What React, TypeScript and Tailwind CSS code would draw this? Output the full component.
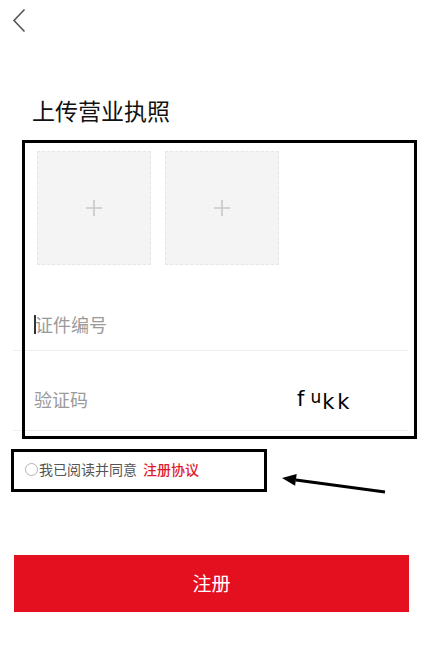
const cjk = { fontFamily: '"Noto Sans CJK SC", "Noto Sans", sans-serif' };

function UploadBox() {
  return (
    <div className="w-[114px] h-[114px] bg-[#f4f4f4] border border-dashed border-[#e6e6e6] flex items-center justify-center">
      <svg width="18" height="18" viewBox="0 0 18 18">
        <path d="M9 1v16M1 9h16" stroke="#c8c8c8" strokeWidth="1.6" />
      </svg>
    </div>
  );
}

export default function App() {
  return (
    <div className="relative w-full h-[655px] bg-white overflow-hidden" style={cjk}>
      <div className="h-[99px] pl-[12px] pt-[8px]">
        <svg width="14" height="25" viewBox="0 0 14 25">
          <path d="M12.5 1.5 2 12.5l10.5 11" fill="none" stroke="#555" strokeWidth="1.6" />
        </svg>
      </div>

      <h1 className="h-[52px] pl-[32px] text-[23px] leading-none text-[#111] font-normal">上传营业执照</h1>

      <div className="px-[13px] w-[421px]">
        <div className="flex gap-[14px] pl-[24px] h-[114px]">
          <UploadBox />
          <UploadBox />
        </div>

        <div className="h-[86px] pt-[34px] flex items-center pl-[21px] border-b border-[#eeeeee]">
          <span className="w-[2px] h-[19px] bg-[#333] mr-[-1px]" />
          <span className="text-[18px] text-[#9a9a9a]">证件编号</span>
        </div>

        <div className="h-[80px] pt-[18px] flex items-center pl-[21px] border-b border-[#eeeeee]">
          <span className="text-[18px] text-[#9a9a9a]">验证码</span>
          <span
            className="ml-[209px] flex items-end text-[21px] leading-none text-black"
            style={{ fontFamily: '"DejaVu Sans", sans-serif' }}
          >
            <span className="mr-[6px]">f</span>
            <span className="text-[17px] mb-[4px] mr-[1px]">u</span>
            <span className="mb-[-3px] mr-[3px]">k</span>
            <span className="mb-[-3px]">k</span>
          </span>
        </div>
      </div>

      <div className="mt-[18px] ml-[11px] w-[256px] h-[43px] border-[3px] border-black flex items-center pl-[11px] pb-[2px]">
        <span className="w-[13px] h-[13px] rounded-full border border-[#b5b5b5] mr-[1px]" />
        <span className="text-[14px] text-[#555]">我已阅读并同意</span>
        <span className="text-[14px] font-medium text-[#e01b2f] ml-[6px]">注册协议</span>
      </div>

      <button className="mt-[63px] ml-[14px] w-[395px] h-[57px] bg-[#e5101f] text-white text-[19px] flex items-center justify-center">
        注册
      </button>

      <div className="absolute left-[22px] top-[140px] w-[395px] h-[299px] border-[3px] border-black pointer-events-none" />

      <svg className="absolute left-[278px] top-[470px]" width="112" height="26" viewBox="0 0 112 26">
        <path d="M107 22 17.9 9.9" stroke="#000" strokeWidth="3" />
        <path d="M4 8 18.7 3.95 17.1 15.85Z" fill="#000" />
      </svg>
    </div>
  );
}
